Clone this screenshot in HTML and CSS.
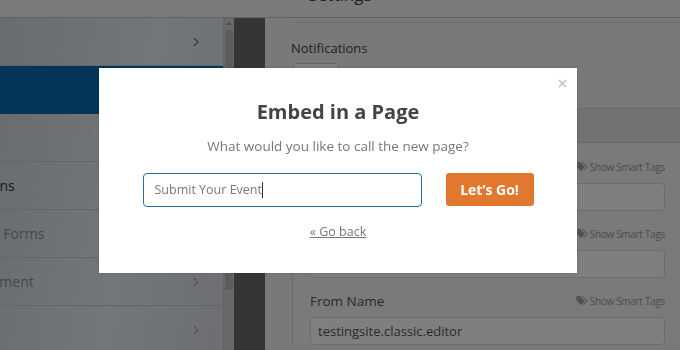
FILE: index.html
```html
<!DOCTYPE html>
<html>
<head>
    <title>Embed in a Page</title>
    <link rel="stylesheet" href="styles.css">
</head>
<body>

<div class="topbar">
    <h1>Settings</h1>
</div>

<div class="main">
    <div class="sidebar">
        <ul class="menu">
            <li><span class="label">General</span><svg class="chev" width="6" height="10" viewBox="0 0 6 10"><polyline points="1,1 5,5 1,9"/></svg></li>
            <li class="active"><span class="label">Notifications</span><svg class="chev" width="6" height="10" viewBox="0 0 6 10"><polyline points="1,1 5,5 1,9"/></svg></li>
            <li><span class="label">Anti-Spam</span><svg class="chev" width="6" height="10" viewBox="0 0 6 10"><polyline points="1,1 5,5 1,9"/></svg></li>
            <li class="short"><span class="label">Confirmations</span><svg class="chev" width="6" height="10" viewBox="0 0 6 10"><polyline points="1,1 5,5 1,9"/></svg></li>
            <li class="muted"><span class="label">Conversational Forms</span><svg class="chev" width="6" height="10" viewBox="0 0 6 10"><polyline points="1,1 5,5 1,9"/></svg></li>
            <li class="muted"><span class="label">Form Abandonment</span><svg class="chev" width="6" height="10" viewBox="0 0 6 10"><polyline points="1,1 5,5 1,9"/></svg></li>
            <li class="muted"><span class="label">Webhooks</span><svg class="chev" width="6" height="10" viewBox="0 0 6 10"><polyline points="1,1 5,5 1,9"/></svg></li>
        </ul>
        <div class="scrollbar">
            <span class="scroll-arrow"></span>
            <span class="scroll-thumb"></span>
        </div>
    </div>

    <div class="rail"></div>

    <div class="panel">
        <div class="section">
            <div class="section-label">Notifications</div>
            <div class="toggle-box"></div>
        </div>

        <div class="card">
            <div class="card-header">Default Notification</div>
            <div class="card-body">
                <div class="field">
                    <div class="field-head">
                        <span class="field-label">Send To Email Address</span>
                        <span class="smart-tags"><svg width="12" height="10" viewBox="0 0 12 10"><path d="M0 1v3l5 5 4-4-5-5H1z M2.2 2.2a.7.7 0 1 0 0 .01z" fill-rule="evenodd"/><path d="M5.5 0h1.3l5 5-4 4-.6-.6 3.4-3.4z"/></svg>Show Smart Tags</span>
                    </div>
                    <div class="text-input">{admin_email}</div>
                </div>
                <div class="field">
                    <div class="field-head">
                        <span class="field-label">Email Subject Line</span>
                        <span class="smart-tags"><svg width="12" height="10" viewBox="0 0 12 10"><path d="M0 1v3l5 5 4-4-5-5H1z M2.2 2.2a.7.7 0 1 0 0 .01z" fill-rule="evenodd"/><path d="M5.5 0h1.3l5 5-4 4-.6-.6 3.4-3.4z"/></svg>Show Smart Tags</span>
                    </div>
                    <div class="text-input">New Entry: Submit Your Event</div>
                </div>
                <div class="field">
                    <div class="field-head">
                        <span class="field-label">From Name</span>
                        <span class="smart-tags"><svg width="12" height="10" viewBox="0 0 12 10"><path d="M0 1v3l5 5 4-4-5-5H1z M2.2 2.2a.7.7 0 1 0 0 .01z" fill-rule="evenodd"/><path d="M5.5 0h1.3l5 5-4 4-.6-.6 3.4-3.4z"/></svg>Show Smart Tags</span>
                    </div>
                    <div class="text-input">testingsite.classic.editor</div>
                </div>
            </div>
        </div>
    </div>
</div>

<!-- Embed modal on top of the dimmed builder -->
<div class="overlay">
    <div class="modal">
        <svg class="modal-close" width="9" height="9" viewBox="0 0 9 9"><path d="M1 1l7 7M8 1l-7 7"/></svg>
        <h2>Embed in a Page</h2>
        <p class="modal-text">What would you like to call the new page?</p>
        <div class="modal-row">
            <div class="page-name">Submit Your Event<span class="caret"></span></div>
            <button class="go-btn">Let’s Go!</button>
        </div>
        <a class="go-back" href="#">« Go back</a>
    </div>
</div>

</body>
</html>
```

FILE: styles.css
```css
* { margin: 0; padding: 0; box-sizing: border-box; }

body {
    font-family: "Open Sans", "Noto Sans", Arial, sans-serif;
    width: 680px;
    height: 350px;
    display: flex;
    flex-direction: column;
    overflow: hidden;
    background: #f2f2f2;
    color: #444;
}

/* Top title bar */
.topbar {
    height: 18px;
    flex: none;
    background: #f4f4f4;
    border-bottom: 1px solid #c4c4c4;
    overflow: hidden;
    text-align: center;
}

.topbar h1 {
    font-size: 17px;
    font-weight: 400;
    line-height: 20px;
    margin-top: -15px;
    color: #444;
}

.main {
    flex: 1;
    display: flex;
    min-height: 0;
}

/* Settings sidebar */
.sidebar {
    width: 234px;
    flex: none;
    display: flex;
    background: linear-gradient(100deg, #d3d9e0 0%, #e8edf2 55%, #d9dde2 100%);
}

.menu {
    list-style: none;
    flex: 1;
    overflow: hidden;
}

.menu li {
    height: 48px;
    border-bottom: 1px solid #c6ccd2;
    display: flex;
    align-items: center;
    justify-content: space-between;
    padding-right: 24px;
    font-size: 14px;
    color: #333;
    white-space: nowrap;
}

/* labels are scrolled out to the left */
.menu li .label {
    margin-left: -98px;
}

.menu li.short .label {
    margin-left: -78px;
}

.menu li.active {
    background: #0a6db2;
    color: #fff;
    border-bottom-color: #0a6db2;
}

.menu li.muted {
    color: #8d8f92;
}

.chev {
    fill: none;
    stroke: #6f7378;
    stroke-width: 1.2;
}

.menu li.muted .chev {
    stroke: #a6aaae;
}

.scrollbar {
    width: 11px;
    flex: none;
    background: #d2d2d2;
    border-left: 1px solid #c8c8c8;
    display: flex;
    flex-direction: column;
    align-items: center;
    padding-top: 4px;
}

.scroll-arrow {
    width: 0;
    height: 0;
    border-left: 3px solid transparent;
    border-right: 3px solid transparent;
    border-bottom: 3px solid #999;
}

.scroll-thumb {
    width: 8px;
    height: 260px;
    margin-top: 5px;
    background: #b6b6b6;
}

.rail {
    width: 31px;
    flex: none;
    background: #6b6b6b;
}

/* Settings content */
.panel {
    flex: 1;
    padding: 4px 0 0 26px;
    overflow: hidden;
    background: #f3f3f3;
}

.section {
    border-top: 1px solid #dcdcdc;
    padding-top: 17px;
    height: 86px;
}

.section-label {
    font-size: 13px;
    line-height: 16px;
    color: #444;
}

.toggle-box {
    width: 46px;
    height: 26px;
    margin: 7px 0 0 2px;
    background: #fff;
    border: 1px solid #ccc;
    border-radius: 3px;
}

.card {
    margin: 0 -6px 0 1px;
    border: 1px solid #d6d6d6;
    border-bottom: none;
    background: #f4f4f4;
}

.card-header {
    height: 34px;
    background: #e4e4e4;
    border-bottom: 1px solid #d6d6d6;
    padding: 0 17px;
    line-height: 33px;
    font-size: 14px;
    font-weight: 600;
    color: #444;
}

.card-body {
    padding: 16px 17px 0 17px;
}

.field {
    margin-bottom: 15px;
    width: 355px;
}

.field-head {
    height: 16px;
    display: flex;
    justify-content: space-between;
    align-items: center;
}

.field-label {
    font-size: 13.5px;
    color: #555;
}

.smart-tags {
    font-size: 10px;
    letter-spacing: -0.3px;
    color: #9a9a9a;
    display: flex;
    align-items: center;
    gap: 2px;
}

.smart-tags svg {
    fill: #a0a0a0;
}

.text-input {
    margin-top: 8px;
    height: 28px;
    background: #fff;
    border: 1px solid #d8d8d8;
    border-radius: 4px;
    padding: 0 7px;
    font-size: 13px;
    line-height: 26px;
    color: #555;
    white-space: nowrap;
    overflow: hidden;
}

/* Modal */
.overlay {
    position: fixed;
    top: 0;
    left: 0;
    right: 0;
    bottom: 0;
    background: rgba(0, 0, 0, 0.5);
    display: flex;
    justify-content: center;
    align-items: flex-start;
    padding: 68px 4px 0 0;
}

.modal {
    position: relative;
    width: 478px;
    height: 205px;
    background: #fff;
    box-shadow: 0 0 3px rgba(0, 0, 0, 0.15);
    display: flex;
    flex-direction: column;
    align-items: center;
    padding-top: 29px;
}

.modal-close {
    position: absolute;
    top: 11px;
    right: 10px;
    stroke: #bbb;
    stroke-width: 1.2;
}

.modal h2 {
    font-size: 20px;
    font-weight: 700;
    line-height: 30px;
    color: #444;
}

.modal-text {
    margin-top: 9px;
    font-size: 13.5px;
    line-height: 20px;
    color: #777;
}

.modal-row {
    margin-top: 17px;
    display: flex;
    gap: 24px;
}

.page-name {
    width: 279px;
    height: 34px;
    border: 1px solid #2271b1;
    border-radius: 4px;
    padding-left: 11px;
    font-size: 12.5px;
    line-height: 32px;
    color: #777;
    display: flex;
    align-items: center;
}

.caret {
    width: 1px;
    height: 16px;
    background: #333;
}

.go-btn {
    width: 88px;
    height: 33px;
    background: #e27730;
    border: none;
    border-radius: 3px;
    color: #fff;
    font-family: inherit;
    font-size: 14px;
    font-weight: 700;
}

.go-back {
    margin-top: 16px;
    font-size: 12.5px;
    line-height: 18px;
    color: #777;
}
```
